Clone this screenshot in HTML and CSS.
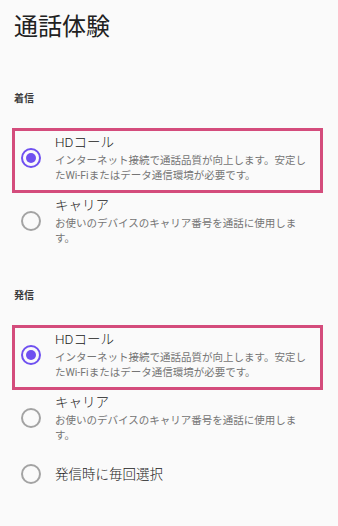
FILE: index.html
```html
<!DOCTYPE html>
<html lang="ja">
<head>
    <meta charset="UTF-8">
    <meta name="viewport" content="width=device-width, initial-scale=1.0">
    <title>通話体験</title>
    <link rel="stylesheet" href="styles.css">
</head>
<body>

<h1 class="page-title">通話体験</h1>

<div class="section">
    <h3 class="section-title">着信</h3>
    <div class="option highlight">
        <span class="radio checked"></span>
        <div class="option-text">
            <div class="option-name">HDコール</div>
            <div class="option-desc">インターネット接続で通話品質が向上します。安定したWi-Fiまたはデータ通信環境が必要です。</div>
        </div>
    </div>
    <div class="option">
        <span class="radio"></span>
        <div class="option-text">
            <div class="option-name">キャリア</div>
            <div class="option-desc">お使いのデバイスのキャリア番号を通話に使用します。</div>
        </div>
    </div>
</div>

<div class="section">
    <h3 class="section-title">発信</h3>
    <div class="option highlight">
        <span class="radio checked"></span>
        <div class="option-text">
            <div class="option-name">HDコール</div>
            <div class="option-desc">インターネット接続で通話品質が向上します。安定したWi-Fiまたはデータ通信環境が必要です。</div>
        </div>
    </div>
    <div class="option">
        <span class="radio"></span>
        <div class="option-text">
            <div class="option-name">キャリア</div>
            <div class="option-desc">お使いのデバイスのキャリア番号を通話に使用します。</div>
        </div>
    </div>
    <div class="option single">
        <span class="radio"></span>
        <div class="option-text">
            <div class="option-name">発信時に毎回選択</div>
        </div>
    </div>
</div>

</body>
</html>
```

FILE: styles.css
```css
body {
    margin: 0;
    background-color: #fafafa;
    font-family: Roboto, "Noto Sans CJK JP", sans-serif;
    color: #212121;
}

.page-title {
    margin: 0;
    padding: 10px 14px 0;
    font-size: 24px;
    font-weight: 400;
    line-height: 34px;
    color: #212121;
}

.section {
    margin-top: 48px;
}

.section + .section {
    margin-top: 36px;
}

.section-title {
    margin: 0 0 22px;
    padding-left: 14px;
    font-size: 10px;
    font-weight: 700;
    line-height: 14px;
    color: #3c3c3c;
}

.option {
    display: flex;
    align-items: center;
    margin: 0 15px 0 12px;
    padding: 0 10px 4px 0;
    border: 3px solid transparent;
}

.option.highlight {
    padding: 2px 10px 7px 0;
    border-color: #d44c7c;
}

.option.single {
    margin-top: 1px;
    padding-top: 10px;
    padding-bottom: 10px;
}

.radio {
    flex: none;
    box-sizing: border-box;
    width: 20px;
    height: 20px;
    margin: 0 14px 0 6px;
    border: 2px solid #a3a3a3;
    border-radius: 50%; /* round */
    display: flex;
    justify-content: center;
    align-items: center;
}

.radio.checked {
    border-color: #6f50f0;
}

.radio.checked::after {
    content: "";
    width: 10px;
    height: 10px;
    border-radius: 50%;
    background-color: #6f50f0;
}

.option-text {
    flex: 1;
}

.option-name {
    font-size: 13.5px;
    font-weight: 300;
    line-height: 18px;
    color: #212121;
}

.option-desc {
    margin-top: 2px;
    font-size: 10.5px;
    line-height: 15px;
    color: #757575;
}
```
